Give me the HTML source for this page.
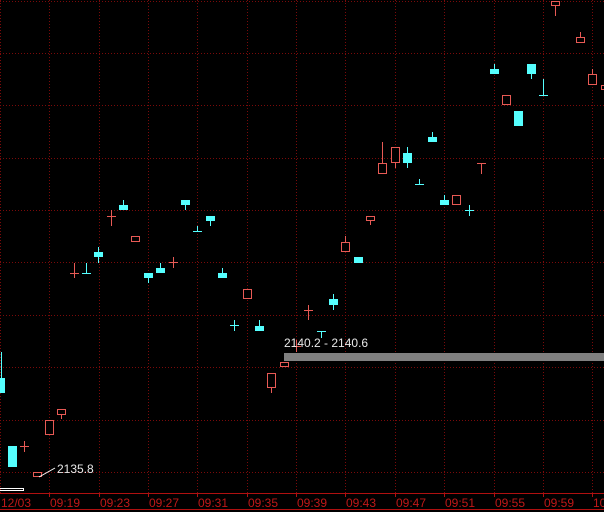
<!DOCTYPE html>
<html><head><meta charset="utf-8"><style>
html,body{margin:0;padding:0;background:#000;width:604px;height:512px;overflow:hidden}
svg{display:block}
text{font-family:"Liberation Sans",sans-serif}
</style></head><body>
<svg width="604" height="512" viewBox="0 0 604 512" xmlns="http://www.w3.org/2000/svg" shape-rendering="crispEdges">
<g stroke="#7a0a0a" stroke-width="1" stroke-dasharray="1,2">
<line x1="0.5" y1="0" x2="0.5" y2="493"/><line x1="49.5" y1="0" x2="49.5" y2="493"/><line x1="99.5" y1="0" x2="99.5" y2="493"/><line x1="148.5" y1="0" x2="148.5" y2="493"/><line x1="197.5" y1="0" x2="197.5" y2="493"/><line x1="247.5" y1="0" x2="247.5" y2="493"/><line x1="296.5" y1="0" x2="296.5" y2="493"/><line x1="345.5" y1="0" x2="345.5" y2="493"/><line x1="395.5" y1="0" x2="395.5" y2="493"/><line x1="444.5" y1="0" x2="444.5" y2="493"/><line x1="494.5" y1="0" x2="494.5" y2="493"/><line x1="543.5" y1="0" x2="543.5" y2="493"/><line x1="592.5" y1="0" x2="592.5" y2="493"/>
<line x1="0" y1="1.5" x2="604" y2="1.5"/><line x1="0" y1="53.5" x2="604" y2="53.5"/><line x1="0" y1="105.5" x2="604" y2="105.5"/><line x1="0" y1="158.5" x2="604" y2="158.5"/><line x1="0" y1="210.5" x2="604" y2="210.5"/><line x1="0" y1="262.5" x2="604" y2="262.5"/><line x1="0" y1="315.5" x2="604" y2="315.5"/><line x1="0" y1="367.5" x2="604" y2="367.5"/><line x1="0" y1="420.5" x2="604" y2="420.5"/><line x1="0" y1="472.5" x2="604" y2="472.5"/>
</g>
<g fill="#b01010">
<rect x="0" y="493" width="604" height="1"/><rect x="0" y="509" width="604" height="1"/>
<rect x="49" y="493" width="1" height="4"/><rect x="99" y="493" width="1" height="4"/><rect x="148" y="493" width="1" height="4"/><rect x="197" y="493" width="1" height="4"/><rect x="247" y="493" width="1" height="4"/><rect x="296" y="493" width="1" height="4"/><rect x="345" y="493" width="1" height="4"/><rect x="395" y="493" width="1" height="4"/><rect x="444" y="493" width="1" height="4"/><rect x="494" y="493" width="1" height="4"/><rect x="543" y="493" width="1" height="4"/><rect x="592" y="493" width="1" height="4"/>
</g>
<g fill="#c01818" font-size="12">
<text x="1" y="507">12/03</text><text x="50" y="507">09:19</text><text x="100" y="507">09:23</text><text x="149" y="507">09:27</text><text x="198" y="507">09:31</text><text x="248" y="507">09:35</text><text x="297" y="507">09:39</text><text x="346" y="507">09:43</text><text x="396" y="507">09:47</text><text x="445" y="507">09:51</text><text x="495" y="507">09:55</text><text x="544" y="507">09:59</text><text x="593" y="507">10</text>
</g>
<rect x="284" y="353" width="320" height="8" fill="#808080"/>
<g fill="#55ffff">
<rect x="1" y="352" width="1" height="26"/><rect x="0" y="378" width="5" height="15"/>
<rect x="8" y="446" width="9" height="21"/>
<rect x="86" y="263" width="1" height="10"/><rect x="82" y="273" width="9" height="1"/>
<rect x="98" y="247" width="1" height="16"/><rect x="94" y="252" width="9" height="5"/>
<rect x="123" y="200" width="1" height="5"/><rect x="119" y="205" width="9" height="5"/>
<rect x="148" y="273" width="1" height="10"/><rect x="144" y="273" width="9" height="5"/>
<rect x="160" y="263" width="1" height="5"/><rect x="156" y="268" width="9" height="5"/>
<rect x="185" y="200" width="1" height="10"/><rect x="181" y="200" width="9" height="5"/>
<rect x="197" y="226" width="1" height="6"/><rect x="193" y="231" width="9" height="1"/>
<rect x="210" y="216" width="1" height="10"/><rect x="206" y="216" width="9" height="5"/>
<rect x="222" y="268" width="1" height="5"/><rect x="218" y="273" width="9" height="5"/>
<rect x="234" y="320" width="1" height="11"/><rect x="230" y="325" width="9" height="1"/>
<rect x="259" y="320" width="1" height="6"/><rect x="255" y="326" width="9" height="5"/>
<rect x="333" y="294" width="1" height="16"/><rect x="329" y="299" width="9" height="6"/>
<rect x="317" y="331" width="9" height="1"/><rect x="321" y="331" width="1" height="7"/>
<rect x="354" y="257" width="9" height="6"/>
<rect x="407" y="147" width="1" height="21"/><rect x="403" y="153" width="9" height="10"/>
<rect x="419" y="179" width="1" height="5"/><rect x="415" y="184" width="9" height="1"/>
<rect x="432" y="132" width="1" height="5"/><rect x="428" y="137" width="9" height="5"/>
<rect x="444" y="195" width="1" height="5"/><rect x="440" y="200" width="9" height="5"/>
<rect x="469" y="205" width="1" height="11"/><rect x="465" y="210" width="9" height="1"/>
<rect x="494" y="64" width="1" height="5"/><rect x="490" y="69" width="9" height="5"/>
<rect x="514" y="111" width="9" height="15"/>
<rect x="531" y="64" width="1" height="15"/><rect x="527" y="64" width="9" height="10"/>
<rect x="543" y="79" width="1" height="17"/><rect x="539" y="95" width="9" height="1"/>
</g>
<g fill="#e85a55">
<rect x="24" y="441" width="1" height="11"/><rect x="20" y="446" width="9" height="1"/>
<rect x="74" y="263" width="1" height="15"/><rect x="70" y="273" width="9" height="1"/>
<rect x="111" y="210" width="1" height="16"/><rect x="107" y="216" width="9" height="1"/>
<rect x="173" y="257" width="1" height="11"/><rect x="169" y="262" width="9" height="1"/>
<rect x="296" y="340" width="1" height="12"/><rect x="292" y="346" width="9" height="1"/>
<rect x="308" y="305" width="1" height="15"/><rect x="304" y="310" width="9" height="1"/>
<rect x="61" y="415" width="1" height="4"/>
<rect x="271" y="388" width="1" height="5"/>
<rect x="345" y="236" width="1" height="6"/>
<rect x="370" y="221" width="1" height="4"/>
<rect x="382" y="142" width="1" height="21"/>
<rect x="395" y="163" width="1" height="5"/>
<rect x="477" y="163" width="9" height="1"/><rect x="481" y="163" width="1" height="11"/>
<rect x="555" y="6" width="1" height="10"/>
<rect x="580" y="32" width="1" height="5"/>
<rect x="592" y="69" width="1" height="5"/>
</g>
<g fill="#000" stroke="#e85a55" stroke-width="1">
<path d="M33.5 472.5h8v4h-8z"/>
<path d="M45.5 420.5h8v14h-8z"/>
<path d="M57.5 409.5h8v5h-8z"/>
<path d="M131.5 236.5h8v5h-8z"/>
<path d="M243.5 289.5h8v9h-8z"/>
<path d="M267.5 373.5h8v14h-8z"/>
<path d="M280.5 362.5h8v4h-8z"/>
<path d="M341.5 242.5h8v9h-8z"/>
<path d="M366.5 216.5h8v4h-8z"/>
<path d="M378.5 163.5h8v10h-8z"/>
<path d="M391.5 147.5h8v15h-8z"/>
<path d="M452.5 195.5h8v9h-8z"/>
<path d="M502.5 95.5h8v9h-8z"/>
<path d="M551.5 1.5h8v4h-8z"/>
<path d="M576.5 37.5h8v5h-8z"/>
<path d="M588.5 74.5h8v10h-8z"/>
<path d="M601.5 85.5h6v4h-6z"/>
</g>
<path d="M0 488.5h23.5v2h-23.5" fill="none" stroke="#ffffff"/>
<line x1="39" y1="477" x2="55" y2="468" stroke="#ffffff" shape-rendering="auto"/>
<g fill="#e8e8e8" font-size="12">
<text x="57" y="473">2135.8</text>
<text x="284" y="347">2140.2 - 2140.6</text>
</g>
</svg>
</body></html>
